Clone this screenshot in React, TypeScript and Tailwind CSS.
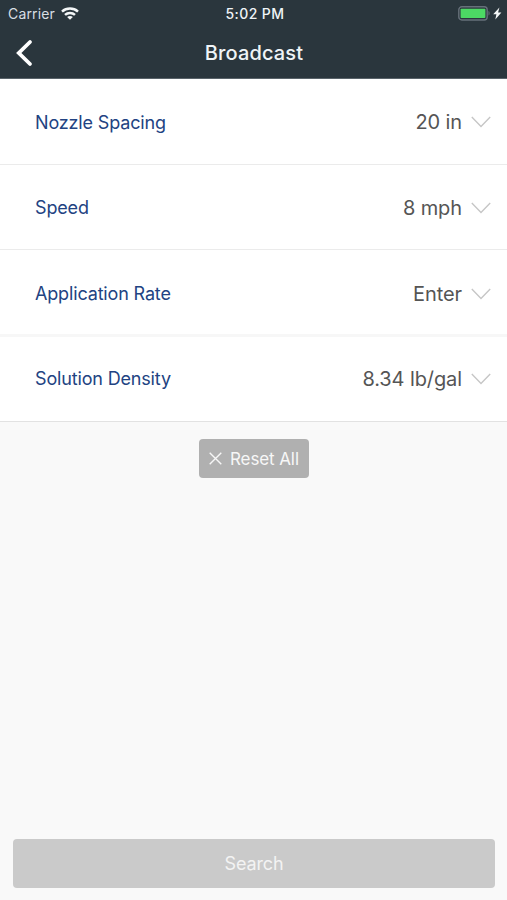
import React from "react";

interface Field {
  label: string;
  value: string;
  row: string;
}

const fields: Field[] = [
  { label: "Nozzle Spacing", value: "20 in", row: "h-[86px] pt-px border-b border-[#ebebeb]" },
  { label: "Speed", value: "8 mph", row: "h-[85px] pt-px border-b border-[#ebebeb]" },
  { label: "Application Rate", value: "Enter", row: "h-[87px] pt-[3px] border-b-3 border-[#f7f7f7]" },
  { label: "Solution Density", value: "8.34 lb/gal", row: "h-[85px] pb-px border-b border-[#e2e2e2]" },
];

const WifiIcon = () => (
  <svg width="18" height="13" viewBox="0 0 18 13" fill="none" stroke="#f4f7f8" strokeWidth="2.5">
    <path d="M1 4.6C5.5.6 12.5.6 17 4.6" />
    <path d="M4 7.9c2.8-2.6 7.2-2.6 10 0" />
    <path d="M9 12.8 6.1 10c1.6-1.5 4.2-1.5 5.8 0z" fill="#f4f7f8" stroke="none" />
  </svg>
);

const BatteryIcon = () => (
  <svg width="44" height="15" viewBox="0 0 44 15">
    <rect x="0.8" y="0.8" width="28.4" height="13.2" rx="3" fill="none" stroke="#66707a" strokeWidth="1.4" />
    <rect x="2.6" y="2.8" width="24.8" height="9.2" rx="0.8" fill="#4cd964" />
    <path d="M30.5 5v4.6c1.5-.5 1.5-4.1 0-4.6z" fill="#66707a" />
    <path d="M41.4 1.4 35.2 8.2h3.2l-1.1 5.4L43.4 6.6h-3.3z" fill="#f4f7f8" />
  </svg>
);

const Header = () => (
  <div className="h-[79px] bg-[#2a363d] border-b border-[#59636a] text-[#eff4f7]">
    <div className="grid grid-cols-3 items-center h-[27px] pl-2 pr-[5px]">
      <div className="flex items-center gap-1.5 text-[14px] text-[#d8dfe4]">
        <span className="tracking-[0.15px]">Carrier</span>
        <WifiIcon />
      </div>
      <div className="text-center font-medium text-[14px] tracking-[0.4px]">5:02 PM</div>
      <div className="flex justify-end">
        <BatteryIcon />
      </div>
    </div>
    <div className="grid grid-cols-3 items-center h-[51px]">
      <button className="pl-4 w-fit">
        <svg width="17" height="28" viewBox="0 0 17 28" fill="none" stroke="#fff" strokeWidth="3.8" strokeLinecap="round">
          <path d="M14 3 2.8 14 14 25" />
        </svg>
      </button>
      <h1 className="text-center text-[20px] font-medium tracking-[0.15px] pl-px">Broadcast</h1>
    </div>
  </div>
);

const FieldRow = ({ label, value, row }: Field) => (
  <div className={`flex items-center bg-white pl-[35px] pr-4 ${row}`}>
    <span className="flex-1 text-[18px] tracking-[-0.16px] text-[#224382]">{label}</span>
    <span className="text-[20px] tracking-[-0.1px] text-[#555]">{value}</span>
    <svg className="ml-[9px]" width="20" height="12" viewBox="0 0 20 12" fill="none" stroke="#c6c6c6" strokeWidth="1.4">
      <path d="M.8 1 10 10.5 19.2 1" />
    </svg>
  </div>
);

const App = () => {
  return (
    <div className="flex flex-col h-[900px] bg-[#f9f9f9] font-['Inter',sans-serif]">
      <Header />
      {fields.map((field) => (
        <FieldRow key={field.label} {...field} />
      ))}
      <button className="flex items-center self-center mt-[17px] ml-[1px] w-[110px] h-[39px] pl-[10px] gap-2 rounded-[4px] bg-[#b0b0b0] text-[17px] text-[#f7f7f7]">
        <svg width="13" height="13" viewBox="0 0 13 13" stroke="#f7f7f7" strokeWidth="1.4">
          <path d="m.7.7 11.6 11.6M12.3.7.7 12.3" />
        </svg>
        <span className="whitespace-nowrap tracking-[-0.1px] pt-[2px]">Reset All</span>
      </button>
      <button className="mt-auto mb-[12px] ml-[13px] mr-[12px] h-[49px] rounded-[4px] bg-[#cacaca] text-[18px] tracking-[-0.15px] text-[#f3f3f3]">
        Search
      </button>
    </div>
  );
};

export default App;
